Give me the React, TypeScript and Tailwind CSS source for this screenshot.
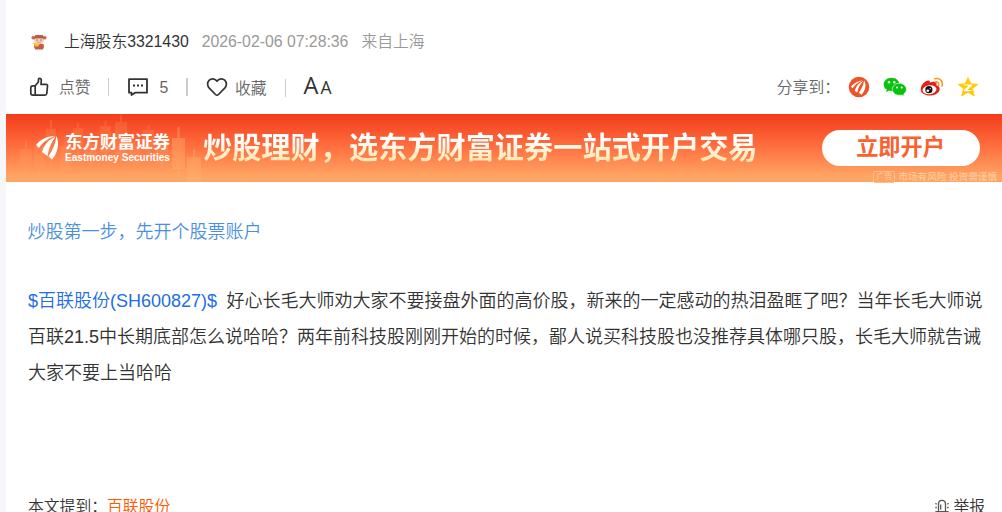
import React from "react";

const candles: number[][] = [
  [14, 35, 12, 16, 26, 58],
  [28, 32, 11, 22, 25, 60],
  [40, 15, 10, 28, 6, 52],
  [54, 32, 11, 24, 22, 52],
  [67, 14, 10, 18, 9, 42],
  [80, 30, 10, 16, 24, 55],
  [94, 12, 11, 26, 7, 48],
  [109, 8, 12, 32, 1, 48],
  [123, 32, 11, 17, 27, 55],
  [137, 16, 11, 20, 11, 42],
  [150, 30, 12, 18, 25, 54],
  [166, 24, 13, 31, 13, 65],
  [181, 43, 14, 25, 36, 68],
];

function Candles() {
  return (
    <svg className="absolute left-0 top-0" width="220" height="68" viewBox="0 0 220 68">
      {candles.map(([x, y, w, h, top, bottom], i) => (
        <g key={x} fill="#ffb16c" opacity={i > 10 ? 0.42 : 0.19}>
          <rect x={x} y={y} width={w} height={h} />
          <rect x={x + w / 2 - 1} y={top} width="2" height={y - top} />
          <rect x={x + w / 2 - 1} y={y + h} width="2" height={Math.max(0, bottom - y - h)} />
        </g>
      ))}
    </svg>
  );
}

function Avatar() {
  return (
    <svg width="18" height="18" viewBox="0 0 18 18">
      <path d="M3.5 4.500 5.500 2h7l2 2.500-1 3h-9z" fill="#c95a48" />
      <ellipse cx="3.200" cy="4.700" rx="1.800" ry="1.800" fill="#c66a4c" />
      <ellipse cx="14.800" cy="4.700" rx="1.800" ry="1.800" fill="#c66a4c" />
      <ellipse cx="9" cy="7.700" rx="5" ry="3.800" fill="#f2d5b9" />
      <path d="M4.500 4h9v1.300h-9z" fill="#a9563d" />
      <circle cx="7" cy="7" r=".7" fill="#7c5848" />
      <circle cx="11" cy="7" r=".7" fill="#7c5848" />
      <path d="M4.500 11h9l.5 3-1.200 2.500H5.200L4 14z" fill="#c9584a" />
      <path d="m3 9.800 3 .5 4 .5-2 2.700H5z" fill="#f2c52e" />
      <path d="M7 8.700h4v1H7z" fill="#d99c87" />
    </svg>
  );
}

function ThumbIcon() {
  return (
    <svg width="20" height="20" viewBox="0 0 20 20" fill="none" stroke="#333" strokeWidth="1.700" strokeLinejoin="round" strokeLinecap="round">
      <path d="M6.200 8.800 9.400 5V2.700q0-1.400 1.300-1.400 1.600 0 1.600 2.300L12 7.300h5q1.700 0 1.500 1.700l-.7 7.500q-.2 1.700-1.900 1.700H6.200z" />
      <path d="M6.200 8.800H3.800Q1.800 8.800 1.800 11v5q0 2.200 2 2.200h2.400" />
    </svg>
  );
}

function CommentIcon() {
  return (
    <svg width="22" height="20" viewBox="0 0 22 20" fill="none" stroke="#333" strokeWidth="1.800" strokeLinejoin="round">
      <path d="M2 2.200h18v13.500H8L4.500 18v-2.300H2z" />
      <path d="M6 7.500h2v2H6zM10 7.500h2v2h-2zM14 7.500h2v2h-2z" fill="#333" stroke="none" />
    </svg>
  );
}

function HeartIcon() {
  return (
    <svg width="22" height="20" viewBox="0 0 22 20" fill="none" stroke="#333" strokeWidth="1.700" strokeLinejoin="round">
      <path d="M11 4.100C8.500 1.200 5.300 1.300 3.300 3.200 1 5.400 1.200 8.900 3.300 11.200L9.500 17.500q1.500 1.400 3 0L18.700 11.200c2.100-2.300 2.300-5.800 0-8-2-1.900-5.200-2-7.700.9z" />
    </svg>
  );
}

function EastIcon() {
  return (
    <svg width="22" height="22" viewBox="0 0 22 22">
      <circle cx="11" cy="11" r="10.300" fill="#ed5526" />
      <g fill="#fff">
        <path d="M3 10.700C5.500 7.600 10 4.800 14.600 4.500 9.900 6.300 7 8.900 4.500 12.300z" />
        <path d="M6.600 14.700C8 10.400 11 6.500 15.400 4.700 12 8.200 10.100 12 9.200 16.500z" />
        <path d="M16.100 4.500c2.500 4 1.700 9.500-2.600 14.300l-2.700-2.100c2.800-3.800 4.800-7.800 5.300-12.200z" />
      </g>
    </svg>
  );
}

function WechatIcon() {
  return (
    <svg width="24" height="20" viewBox="0 0 24 20">
      <path d="M8.500.8C4.200.8.7 3.700.7 7.400c0 2.100 1.200 4 3.100 5.200l-.7 2.600L6 13.600q1.300.4 2.500.4c4.500 0 7.900-2.900 7.900-6.600S12.900.8 8.500.8z" fill="#09c20d" />
      <path d="M16.300 6.300c-3.900 0-7 2.700-7 6s3.100 6 7 6q1.300 0 2.500-.4l2.600 1.400-.7-2.300c1.700-1.100 2.700-2.700 2.700-4.700 0-3.300-3.200-6-7.100-6z" fill="#09c20d" stroke="#fff" strokeWidth=".6" />
      <g fill="#fff"><circle cx="6" cy="5.300" r="1.200" /><circle cx="11.200" cy="5.300" r="1.200" /><circle cx="14" cy="10.500" r="1" /><circle cx="18.700" cy="10.500" r="1" /></g>
    </svg>
  );
}

function WeiboIcon() {
  return (
    <svg width="24" height="20" viewBox="0 0 24 20">
      <path d="M9.600 5.500C10.500 3.100 8.300 2.700 5.400 4.600 2.600 6.500.7 9.500.7 12.200c0 3.900 4.200 6.300 9 6.300 5.900 0 10-3.200 10-6.600 0-2.300-1.400-3.300-3.300-3.700.8-2.100-.3-3.800-3.100-3.400-1.400.1-2.600.6-3.700.7z" fill="#e52018" />
      <ellipse cx="9.500" cy="12.700" rx="7" ry="4.500" fill="#fff" transform="rotate(-7 9.500 12.700)" />
      <circle cx="8.900" cy="12.700" r="3.600" fill="#181313" />
      <circle cx="7.800" cy="13.700" r="1.300" fill="#fff" /><circle cx="10.200" cy="11.700" r=".6" fill="#fff" />
      <path d="M14.800 1.700c5-1.200 8.700 2.500 7.200 7.300M15.200 5c2.400-.5 4.100 1.100 3.500 3.400" fill="none" stroke="#f39b21" strokeWidth="1.600" strokeLinecap="round" />
    </svg>
  );
}

function StarIcon() {
  return (
    <svg width="22" height="20" viewBox="0 0 22 20">
      <path d="m11 .5 2.800 6.300 7 .5-5.400 4.400 2 7.300-6.400-3.800L4.600 19l2-7.300L1.200 7.300l7-.5z" fill="#ffca00" stroke="#ffca00" strokeWidth=".8" strokeLinejoin="round" />
      <path d="M6.600 7.400h8.600v1.300l-4.900 4c1.700.3 4 .3 6 0-2.900 1.600-6.500 1.800-9.400 1.200v-1.200l4.700-3.900c-1.700-.4-3.400-.6-5-.4z" fill="#fff" />
    </svg>
  );
}

function AlarmIcon() {
  return (
    <svg width="14" height="16" viewBox="0 0 14 16" fill="none" stroke="#555" strokeWidth="1.300">
      <path d="M3.500 12.300V5.200q0-3.900 3.500-3.900t3.500 3.900v7.100M1 12.600h12v2.200H1zM5.700 5.500v5M.3 4.500l1.500.7M.3 8.500h1.500M13.700 4.500l-1.500.7M13.700 8.500h-1.500" />
    </svg>
  );
}

export default function App() {
  return (
    <div lang="zh-CN" className="h-[512px] w-[1002px] overflow-hidden whitespace-nowrap bg-[#f6f7fb] pl-1.5 font-['Liberation_Sans','Noto_Sans_CJK_SC',sans-serif] text-[15.800px] font-[350] text-[#333]">
      <main className="flex h-full flex-col bg-white">
        <header className="flex h-[60px] shrink-0 items-center pl-6 pt-6">
          <Avatar />
          <span className="ml-4">上海股东<span className="font-normal">3321430</span></span>
          <span className="ml-[13px] font-normal text-[#999]">2026-02-06 07:28:36</span>
          <span className="ml-[13px] text-[#999]">来自上海</span>
        </header>

        <div className="flex h-[54px] shrink-0 items-center pl-[23px] pr-[23px] text-[#666]">
          <ThumbIcon />
          <span className="ml-[10px] pt-[2px]">点赞</span>
          <i className="ml-[17px] h-[18px] w-px bg-[#ccc]" />
          <span className="ml-[18px]"><CommentIcon /></span>
          <span className="ml-[11px] pt-px font-normal">5</span>
          <i className="ml-[18px] h-[18px] w-[1.500px] bg-[#ccc]" />
          <span className="ml-[18px]"><HeartIcon /></span>
          <span className="ml-[7px] pt-[3px]">收藏</span>
          <i className="ml-[18px] mt-[2px] h-[18px] w-px bg-[#ccc]" />
          <span className="ml-[18px] flex -translate-y-0.5 items-baseline font-['Open_Sans',sans-serif] text-[#333]">
            <b className="text-[23.500px] font-normal leading-6">A</b>
            <b className="ml-[2px] text-[17.500px] font-normal leading-5">A</b>
          </span>
          <span className="ml-auto mr-[8px] pt-[2px]">分享到：</span>
          <div className="flex items-center gap-[13px]">
            <EastIcon /><WechatIcon /><WeiboIcon /><StarIcon />
          </div>
        </div>

        <section className="relative flex h-[68px] shrink-0 items-center bg-[linear-gradient(180deg,#f33c1a_0%,#ff7140_50%,#ffa564_92%)]">
          <Candles />
          <div className="relative ml-[30px] flex h-[34px] items-center text-white">
            <svg width="23" height="26" viewBox="0 0 23 26" fill="#fff">
              <path d="M0 10C4 5 10 1.200 19 1 11 4 7 7.500 3 13z" />
              <path d="M6 17C8 10 12 5 19.500 1.500 15 8 13 13 11.500 21z" />
              <path d="M20.500 1c3.500 9 1 16.500-4.500 23.500l-3.500-3C17 15 19.500 8 20.500 1z" />
            </svg>
            <div className="ml-[6px] flex h-[34px] w-[105px] flex-col justify-center">
              <b className="text-[17.500px] font-bold leading-[19px]">东方财富证券</b>
              <b className="text-[10.100px] font-bold leading-[11px]">Eastmoney Securities</b>
            </div>
          </div>
          <h1 className="ml-[33px] bg-[linear-gradient(180deg,#fff_30%,#ffe7b5_80%)] bg-clip-text text-[29.200px] font-bold leading-[40px] text-transparent">炒股理财，选东方财富证券一站式开户交易</h1>
          <button className="ml-[64px] h-[36px] w-[158px] rounded-full bg-white text-[22.200px] font-bold text-[#fb602e]">立即开户</button>
          <div className="absolute -bottom-px right-[5px] flex h-[13px] items-center gap-[3px] text-[9.600px] font-normal leading-[12px] text-[#ffd0a5]">
            <span className="flex h-[12px] w-[22px] items-center justify-center rounded-[2px] border border-[#ffbd8b] text-[8px]">广告</span>
            <span>市场有风险 投资需谨慎</span>
          </div>
        </section>

        <a className="ml-[21.500px] mt-[37px] text-[18px] leading-[27px] text-[#4a90e2]">炒股第一步，先开个股票账户</a>
        <article className="ml-[22px] mt-[37px] text-[18px] leading-[36px]">
          <p><a className="text-[#1d6ee2]"><span className="font-normal">$</span>百联股份<span className="font-normal">(SH600827)$</span></a><span className="ml-[9.500px]">好心长毛大师劝大家不要接盘外面的高价股，新来的一定感动的热泪盈眶了吧？当年长毛大师说</span></p>
          <p>百联<span className="font-normal">21.5</span>中长期底部怎么说哈哈？两年前科技股刚刚开始的时候，鄙人说买科技股也没推荐具体哪只股，长毛大师就告诫</p>
          <p>大家不要上当哈哈</p>
        </article>

        <footer className="mt-[104px] flex h-[24px] shrink-0 items-center pl-[22px] pr-[17px]">
          <span>本文提到：</span><a className="text-[#ff5800]">百联股份</a>
          <span className="ml-auto flex items-center gap-1"><AlarmIcon />举报</span>
        </footer>
      </main>
    </div>
  );
}
